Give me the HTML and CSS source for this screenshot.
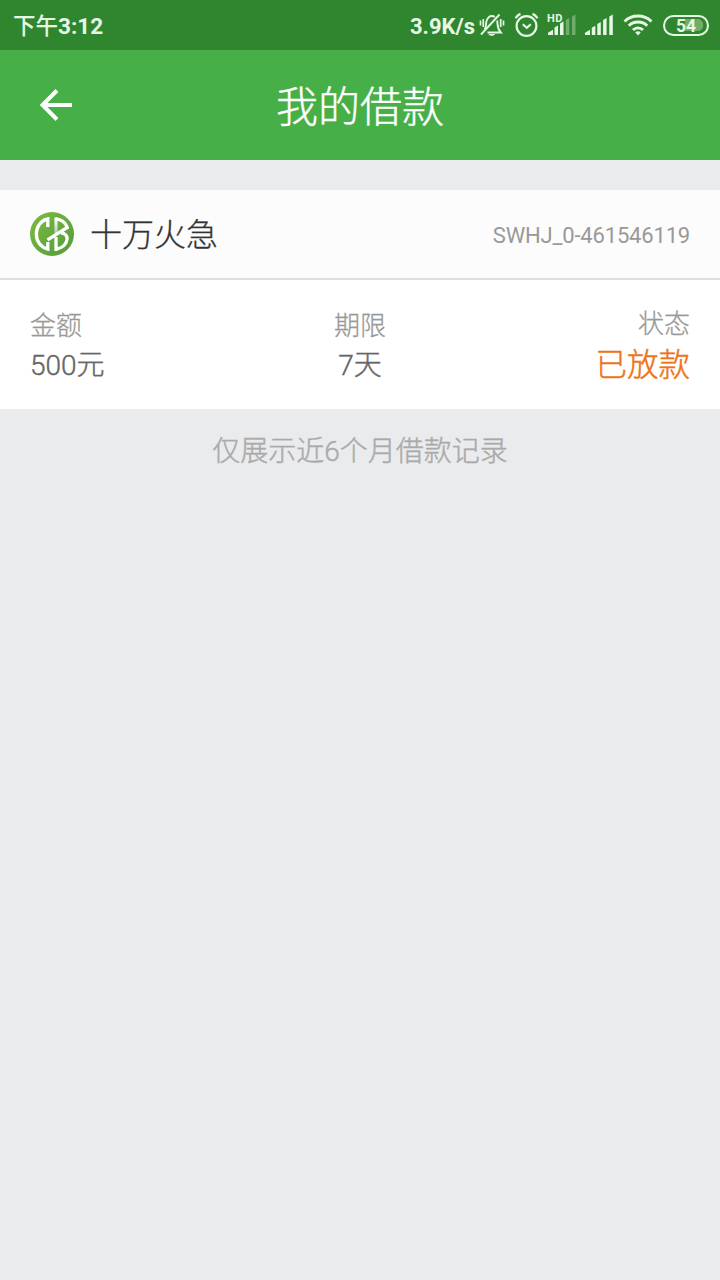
FILE: index.html
```html
<!DOCTYPE html>
<html lang="zh-CN">
<head>
<meta charset="utf-8">
<meta name="viewport" content="width=device-width, initial-scale=1">
<title>我的借款</title>
<link rel="stylesheet" href="styles.css">
</head>
<body>
<header class="status-bar">
  <span class="clock"><span class="period">下午</span>3:12</span>
  <div class="indicators">
    <span class="speed">3.9K/s</span>
    <svg class="icon bell" width="26" height="26" viewBox="0 0 26 26" fill="none" stroke="currentColor" stroke-width="1.9">
      <path d="M5.500 17.500C7.500 15.500 6.800 11.500 7.500 9C8.500 6 10.500 4 13 4C14.200 4 15 4.300 15.800 5M18.200 8.500C18.800 12.500 17.700 16 21.800 20.500H8.500M2 22.500L20.500 2.500"/>
      <path d="M9.500 22h6.500c-.3 2.400-6.200 2.400-6.500 0z" fill="currentColor" stroke="none"/>
      <path d="M1.500 8.500v5M4.300 7v8M21.700 7v8M24.500 8.500v5" stroke-width="1.700"/>
    </svg>
    <svg class="icon alarm" width="26" height="26" viewBox="0 0 26 26" fill="none" stroke="currentColor" stroke-width="2.200">
      <circle cx="12.500" cy="14" r="9.900"/>
      <path d="M8.800 12.200l4 3.600 4-3.600M1.500 6.300C2.700 4.300 4.300 2.700 6.500 1.900M18.500 1.900C20.700 2.700 22.300 4.300 23.500 6.300"/>
    </svg>
    <div class="hd-signal">
      <span class="hd">HD</span>
      <svg class="icon" width="30" height="22" viewBox="0 0 30 22" fill="currentColor">
        <path d="M1 21v-2.200l5-3V21zM7.500 13.500l3.500-2V21H7.500zM13 9.500l3.500-2V21H13z"/>
        <path d="M18.800 6l3.500-2V21h-3.500zM25 2.500l3.500-2V21H25z" opacity=".35"/>
      </svg>
    </div>
    <svg class="icon signal" width="30" height="22" viewBox="0 0 30 22" fill="currentColor">
      <path d="M0 21v-2.200l5-3V21zM6.800 13.800l3.500-2V21H6.800zM12.300 10l3.500-2V21h-3.500zM18.100 6l3.500-2V21h-3.500zM24.300 2.500l3.500-2V21h-3.500z"/>
    </svg>
    <svg class="icon wifi" width="30" height="22" viewBox="0 0 30 22" fill="none" stroke="currentColor" stroke-width="2.900">
      <path d="M1.500 7.500C9 .2 21 .2 28.500 7.500M5.800 11.800C10.800 6.800 19.200 6.800 24.200 11.800M10 16C12.800 13.200 17.200 13.200 20 16"/>
      <path d="M12.200 18.300c1.500-1.400 4.100-1.400 5.600 0L15 21.600z" fill="currentColor" stroke="none"/>
    </svg>
    <div class="battery"><span>54</span></div>
  </div>
</header>
<nav class="title-bar">
  <svg class="back" width="34" height="34" viewBox="0 0 34 34" fill="none" stroke="currentColor" stroke-width="4">
    <path d="M33 17H4M18 2.500L3.500 17L18 31.500"/>
  </svg>
  <h1>我的借款</h1>
</nav>
<main>
  <section class="loan">
    <div class="loan-head">
      <svg class="logo" width="44" height="44" viewBox="0 0 44 44">
        <defs>
          <linearGradient id="leaf" x1="0" y1="0" x2="1" y2="1">
            <stop offset="0" stop-color="#7dbb42"/>
            <stop offset="1" stop-color="#529b3b"/>
          </linearGradient>
          <linearGradient id="fold" gradientUnits="userSpaceOnUse" x1="0" y1="6" x2="0" y2="22">
            <stop offset="0" stop-color="#fff"/>
            <stop offset="1" stop-color="#b5c9ad"/>
          </linearGradient>
        </defs>
        <circle cx="22" cy="22" r="22" fill="url(#leaf)"/>
        <path d="M26 5.500V23" stroke="url(#fold)" stroke-width="3.200"/>
        <g fill="none" stroke="#fff" stroke-width="3.300">
          <path d="M17.800 15V6.900C11 8.400 6.300 14.500 6.300 22S11 35.600 17.800 37.100V30"/>
          <path d="M26 39V25M25.500 6.900C31.500 7.600 35.500 10.500 37.300 15.500L17.500 27.800"/>
          <path d="M31 20.800C35.500 21.500 37.400 24 37 27.500C36.300 32.500 32 36.300 26 37.100"/>
        </g>
      </svg>
      <h2>十万火急</h2>
      <span class="serial">SWHJ_0-461546119</span>
    </div>
    <dl class="facts">
      <div class="fact">
        <dt>金额</dt>
        <dd>500元</dd>
      </div>
      <div class="fact center">
        <dt>期限</dt>
        <dd>7天</dd>
      </div>
      <div class="fact end">
        <dt>状态</dt>
        <dd class="paid">已放款</dd>
      </div>
    </dl>
  </section>
  <p class="note">仅展示近6个月借款记录</p>
</main>
</body>
</html>
```
FILE: styles.css
```css
* {
  box-sizing: border-box;
  margin: 0;
  padding: 0;
}

body {
  min-height: 1280px;
  background: #e9ebed;
  color: #666;
  font-family: Roboto, "Noto Sans CJK SC", sans-serif;
}

svg {
  display: block;
  flex: none;
}

.status-bar {
  display: flex;
  justify-content: space-between;
  align-items: center;
  height: 50px;
  padding: 0 11px 0 13px;
  background: #30862f;
  color: #e6f7e4;
}

.clock,
.speed {
  padding-top: 3px;
  font-size: 22.5px;
  font-weight: 700;
  line-height: 47px;
  white-space: nowrap;
}

.period {
  font-weight: 500;
}

.indicators {
  display: flex;
  align-items: center;
}

.speed {
  font-size: 22px;
}

.bell {
  margin-left: 4px;
}

.alarm {
  margin-left: 9px;
}

.hd-signal {
  position: relative;
  margin-left: 7px;
}

.hd {
  position: absolute;
  left: 0;
  top: -1px;
  font-size: 11px;
  font-weight: 700;
  line-height: 11px;
  letter-spacing: 0.4px;
}

.signal,
.wifi {
  margin-left: 8px;
}

.battery {
  width: 46px;
  height: 21px;
  margin-left: 10px;
  border: 2px solid currentColor;
  border-radius: 11px;
  background: radial-gradient(circle at 12px 6px, #6fad6b 6px, transparent 6.5px) 20px center / 18px 12px no-repeat, linear-gradient(#6fad6b, #6fad6b) 20px center / 12px 12px no-repeat;
  font-size: 17.5px;
  font-weight: 700;
  line-height: 18px;
  text-align: center;
}

.title-bar {
  display: grid;
  grid-template-columns: 34px 1fr 34px;
  align-items: center;
  height: 110px;
  padding: 0 39px;
  background: #47af47;
  color: #fff;
}

.title-bar h1 {
  padding-top: 6px;
  font-size: 42px;
  font-weight: 300;
  line-height: 60px;
  text-align: center;
  -webkit-text-stroke: 0.4px;
}

.loan {
  margin-top: 30px;
  background: #fff;
}

.loan-head {
  display: flex;
  align-items: center;
  height: 90px;
  padding: 0 30px;
  border-bottom: 2px solid #dedede;
  background: #fcfcfc;
}

.loan-head h2 {
  margin: -4px 0 0 16px;
  color: #333;
  font-size: 32px;
  font-weight: 300;
  -webkit-text-stroke: 0.3px;
}

.serial {
  margin-left: auto;
  padding-top: 2px;
  color: #999;
  font-size: 22px;
  letter-spacing: -0.18px;
}

.facts {
  display: grid;
  grid-template-columns: repeat(3, 1fr);
  height: 129px;
  padding: 26px 30px 0;
}

.center {
  text-align: center;
}

.end {
  margin-top: -2px;
  text-align: right;
}

.facts dt {
  color: #999;
  font-size: 26px;
  font-weight: 300;
  line-height: 40px;
  -webkit-text-stroke: 0.3px;
}

.facts dd {
  font-size: 28px;
  font-weight: 300;
  line-height: 40px;
  -webkit-text-stroke: 0.4px;
}

.facts .paid {
  padding-top: 2px;
  color: #ee7417;
  font-size: 31.5px;
  -webkit-text-stroke: 0.5px;
}

.note {
  padding-top: 23px;
  color: #aaa;
  font-size: 28px;
  font-weight: 300;
  line-height: 40px;
  text-align: center;
  -webkit-text-stroke: 0.4px;
}
```
